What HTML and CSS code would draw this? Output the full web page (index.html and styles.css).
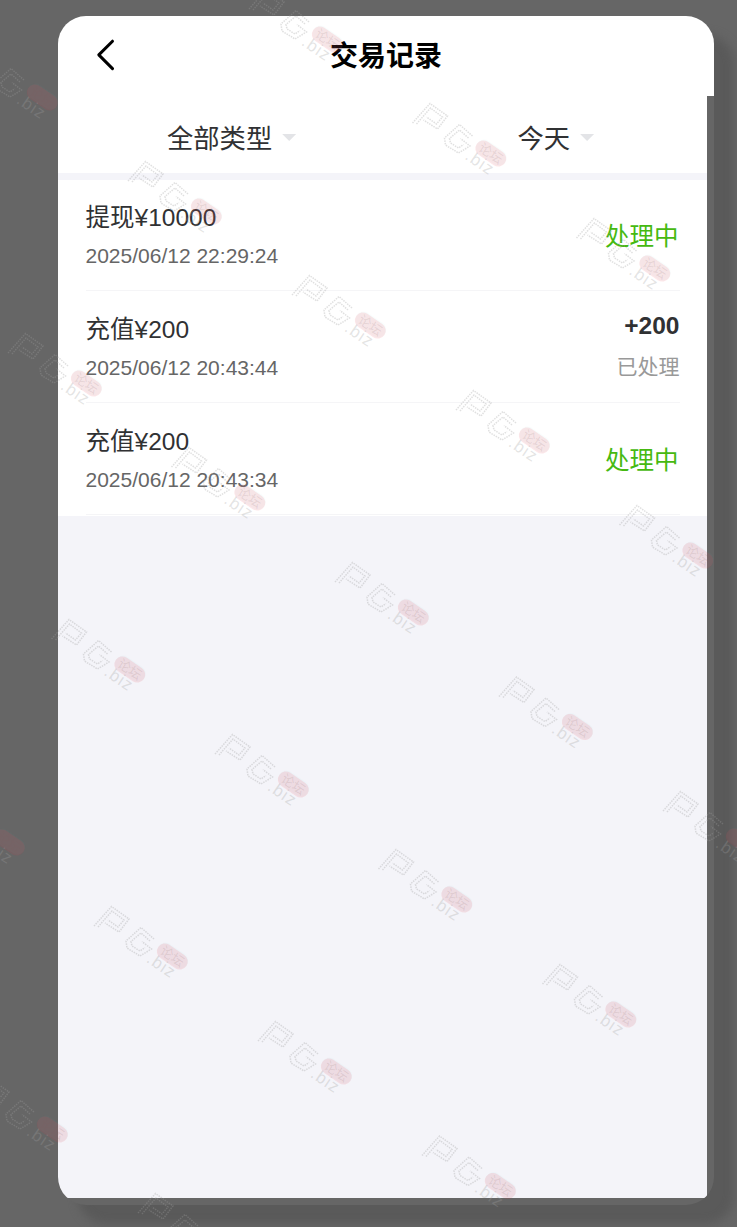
FILE: index.html
```html
<!DOCTYPE html>
<html lang="zh-CN">
<head>
<meta charset="utf-8">
<title>交易记录</title>
<link rel="stylesheet" href="styles.css">
</head>
<body>
<main class="phone">
  <header class="header">
    <svg class="back" width="20" height="32" viewBox="0 0 20 32"><path d="M16.5 2.2 2.8 15.9 16.5 29.6"/></svg>
    <h1 class="title">交易记录</h1>
  </header>
  <div class="content">
    <nav class="filters">
      <div class="filter filter-type"><span class="label">全部类型</span><i class="caret"></i></div>
      <div class="filter filter-date"><span class="label">今天</span><i class="caret"></i></div>
    </nav>
    <ul class="list">
      <li class="row">
        <div><div class="name">提现¥10000</div><div class="time">2025/06/12 22:29:24</div></div>
        <div class="pending">处理中</div>
      </li>
      <li class="row">
        <div><div class="name">充值¥200</div><div class="time">2025/06/12 20:43:44</div></div>
        <div class="result"><div class="amount">+200</div><div class="done">已处理</div></div>
      </li>
      <li class="row">
        <div><div class="name">充值¥200</div><div class="time">2025/06/12 20:43:34</div></div>
        <div class="pending">处理中</div>
      </li>
    </ul>
  </div>
</main>
<svg class="watermarks" width="737" height="1227" viewBox="0 0 737 1227">
  <defs>
    <g id="mark">
      <path class="mark-line" d="M1 21 18.5 1.5 36 14 26 27 12 18M5 22 19 6 31 15 25 22 15 15"/>
      <path class="mark-line" d="M61 34 48 22.5 33 36 34 43 47 51 58.5 44 49 36.5M57 36 48 28 38 36.5 39 41 47 46 52 42.5"/>
      <g transform="translate(79.3 51.5) rotate(34)">
        <rect class="mark-glow" x="-17" y="-9" width="34" height="16" rx="8"/>
        <rect class="mark-pill" x="-17" y="-8" width="34" height="16" rx="8"/>
        <text class="mark-cn" x="0" y="4.5">论坛</text>
      </g>
      <text class="mark-biz" transform="translate(52.5 56.5) rotate(34)">.biz</text>
    </g>
  </defs>
  <use href="#mark" x="248" y="-12"/>
  <use href="#mark" x="411.5" y="102"/>
  <use href="#mark" x="575.5" y="217"/>
  <use href="#mark" x="-37" y="46"/>
  <use href="#mark" x="127" y="160"/>
  <use href="#mark" x="291" y="274"/>
  <use href="#mark" x="455" y="389"/>
  <use href="#mark" x="618.5" y="504"/>
  <use href="#mark" x="7" y="332"/>
  <use href="#mark" x="170.5" y="446"/>
  <use href="#mark" x="334" y="561"/>
  <use href="#mark" x="498" y="675.5"/>
  <use href="#mark" x="662" y="790"/>
  <use href="#mark" x="50.5" y="618"/>
  <use href="#mark" x="214" y="733"/>
  <use href="#mark" x="377.5" y="848"/>
  <use href="#mark" x="541.5" y="963"/>
  <use href="#mark" x="-70" y="791"/>
  <use href="#mark" x="93" y="905"/>
  <use href="#mark" x="257" y="1020"/>
  <use href="#mark" x="421" y="1134.5"/>
  <use href="#mark" x="-27" y="1078"/>
  <use href="#mark" x="137" y="1192"/>
</svg>
</body>
</html>
```
FILE: styles.css
```css
* { box-sizing: border-box; }
body {
  margin: 0;
  height: 1227px;
  padding: 16px 0 0 58px;
  overflow: hidden;
  position: relative;
  background: #666;
  color: #303133;
  font-family: "Liberation Sans", "Noto Sans CJK SC", sans-serif;
}
.phone {
  width: 656px;
  height: 1189px;
  border-radius: 28px;
  overflow: hidden;
  box-shadow: 20px 19px 10px #5a5a5a;
}
.header {
  height: 80px;
  background: #fff;
  display: grid;
  grid-template-columns: 58px 1fr 58px;
  align-items: center;
}
.back { margin: 0 0 2px 38px; fill: none; stroke: #000; stroke-width: 3; stroke-linecap: round; stroke-linejoin: round; }
.title { margin: 0; padding-top: 2px; text-align: center; color: #000; font-size: 28px; line-height: 40px; font-weight: 700; }
.content { width: 649px; height: 1102px; background: #f4f4f9; }
.filters {
  height: 84px;
  border-bottom: 7px solid #f4f4f9;
  background: #fff;
  display: grid;
  grid-template-columns: 1fr 1fr;
}
.filter { display: flex; align-items: center; gap: 10px; height: 83px; font-size: 26.3px; line-height: 40px; }
.label { padding-top: 2px; }
.filter-type { padding-left: 109px; }
.filter-date { padding-left: 135px; }
.caret { width: 14px; height: 7px; background: #e3e4e7; clip-path: polygon(0 0, 100% 0, 50% 100%); }
.list { margin: 0; padding: 0 27.5px 1px; list-style: none; background: #fff; }
.row { height: 112px; display: flex; justify-content: space-between; align-items: center; border-bottom: 1px solid #f5f5f7; }
.row:first-child { height: 111px; }
.name { font-size: 24.5px; line-height: 38px; padding-top: 3px; }
.time { font-size: 21px; line-height: 37px; color: #666; }
.pending { font-size: 24.5px; line-height: 36px; padding: 3px 1px 0 0; color: #46b911; }
.row:last-child .pending { padding-top: 4px; }
.result { text-align: right; }
.amount { font-size: 24.5px; line-height: 40px; font-weight: 700; }
.done { font-size: 21px; line-height: 41px; color: #999; }
.watermarks { position: absolute; left: 0; top: 0; pointer-events: none; }
.mark-line { fill: none; stroke: #a0a0a0; stroke-opacity: .32; stroke-width: 1.5; stroke-dasharray: 1.5 1; }
.mark-glow { fill: #48c8c0; fill-opacity: .04; }
.mark-pill { fill: #f03c46; fill-opacity: .12; }
.mark-cn { font: 13px "Noto Sans CJK SC", sans-serif; text-anchor: middle; fill: #806060; fill-opacity: .15; }
.mark-biz { font: 17px "Liberation Sans", sans-serif; letter-spacing: 1.2px; fill: #a0a0a0; fill-opacity: .28; }
```
